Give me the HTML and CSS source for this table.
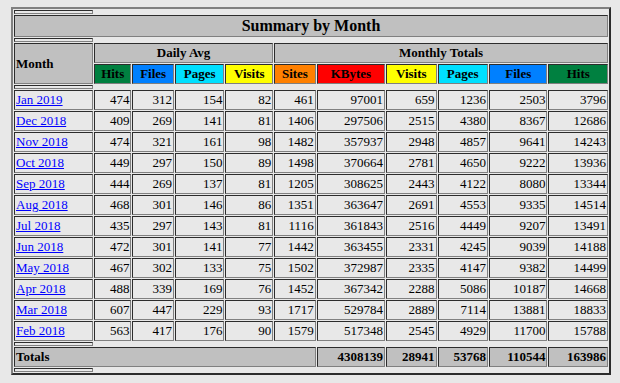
FILE: index.html
```html
<!DOCTYPE html>
<html>
<head>
<meta charset="utf-8">
<title>Summary by Month</title>
<link rel="stylesheet" href="styles.css">
</head>
<body>
<table class="summary">
<tr><th class="spacer"></th></tr>
<tr><th class="title" colspan="11">Summary by Month</th></tr>
<tr><th class="spacer"></th></tr>
<tr>
<th class="grey left month" rowspan="2">Month</th>
<th class="grey" colspan="4">Daily Avg</th>
<th class="grey" colspan="6">Monthly Totals</th>
</tr>
<tr>
<th class="c-hits">Hits</th>
<th class="c-files">Files</th>
<th class="c-pages">Pages</th>
<th class="c-visits">Visits</th>
<th class="c-sites">Sites</th>
<th class="c-kbytes">KBytes</th>
<th class="c-visits">Visits</th>
<th class="c-pages">Pages</th>
<th class="c-files">Files</th>
<th class="c-hits">Hits</th>
</tr>
<tr><th class="spacer"></th></tr>
<tr><td class="m"><a href="#">Jan 2019</a></td><td>474</td><td>312</td><td>154</td><td>82</td><td>461</td><td>97001</td><td>659</td><td>1236</td><td>2503</td><td>3796</td></tr>
<tr><td class="m"><a href="#">Dec 2018</a></td><td>409</td><td>269</td><td>141</td><td>81</td><td>1406</td><td>297506</td><td>2515</td><td>4380</td><td>8367</td><td>12686</td></tr>
<tr><td class="m"><a href="#">Nov 2018</a></td><td>474</td><td>321</td><td>161</td><td>98</td><td>1482</td><td>357937</td><td>2948</td><td>4857</td><td>9641</td><td>14243</td></tr>
<tr><td class="m"><a href="#">Oct 2018</a></td><td>449</td><td>297</td><td>150</td><td>89</td><td>1498</td><td>370664</td><td>2781</td><td>4650</td><td>9222</td><td>13936</td></tr>
<tr><td class="m"><a href="#">Sep 2018</a></td><td>444</td><td>269</td><td>137</td><td>81</td><td>1205</td><td>308625</td><td>2443</td><td>4122</td><td>8080</td><td>13344</td></tr>
<tr><td class="m"><a href="#">Aug 2018</a></td><td>468</td><td>301</td><td>146</td><td>86</td><td>1351</td><td>363647</td><td>2691</td><td>4553</td><td>9335</td><td>14514</td></tr>
<tr><td class="m"><a href="#">Jul 2018</a></td><td>435</td><td>297</td><td>143</td><td>81</td><td>1116</td><td>361843</td><td>2516</td><td>4449</td><td>9207</td><td>13491</td></tr>
<tr><td class="m"><a href="#">Jun 2018</a></td><td>472</td><td>301</td><td>141</td><td>77</td><td>1442</td><td>363455</td><td>2331</td><td>4245</td><td>9039</td><td>14188</td></tr>
<tr><td class="m"><a href="#">May 2018</a></td><td>467</td><td>302</td><td>133</td><td>75</td><td>1502</td><td>372987</td><td>2335</td><td>4147</td><td>9382</td><td>14499</td></tr>
<tr><td class="m"><a href="#">Apr 2018</a></td><td>488</td><td>339</td><td>169</td><td>76</td><td>1452</td><td>367342</td><td>2288</td><td>5086</td><td>10187</td><td>14668</td></tr>
<tr><td class="m"><a href="#">Mar 2018</a></td><td>607</td><td>447</td><td>229</td><td>93</td><td>1717</td><td>529784</td><td>2889</td><td>7114</td><td>13881</td><td>18833</td></tr>
<tr><td class="m"><a href="#">Feb 2018</a></td><td>563</td><td>417</td><td>176</td><td>90</td><td>1579</td><td>517348</td><td>2545</td><td>4929</td><td>11700</td><td>15788</td></tr>
<tr><th class="spacer"></th></tr>
<tr>
<th class="grey left" colspan="6">Totals</th>
<th class="grey right">4308139</th>
<th class="grey right">28941</th>
<th class="grey right">53768</th>
<th class="grey right">110544</th>
<th class="grey right">163986</th>
</tr>
<tr><th class="spacer"></th></tr>
</table>
</body>
</html>
```

FILE: styles.css
```css
html, body {
  background: #e8e8e8;
}
body {
  margin: 7px 0 0 11px;
  color: #000;
  font-family: "Liberation Serif", "Times New Roman", serif;
  font-size: 16px;
}
.summary {
  width: 600px;
  border: 2px outset #808080;
  border-spacing: 1px;
  border-collapse: separate;
}
.summary th,
.summary td {
  border: 1px inset #808080;
  padding: 1px;
  font-size: 13px;
  line-height: 16px;
}
.summary td {
  text-align: right;
  white-space: nowrap;
}
.summary td.m {
  text-align: left;
}
.summary th {
  text-align: center;
  font-weight: bold;
}
.summary th.spacer {
  height: 2px;
  padding: 0;
  line-height: 0;
  font-size: 0;
}
.summary th.title {
  background: #c0c0c0;
  font-size: 16px;
  line-height: 18px;
}
.grey { background: #c0c0c0; }
.summary th.left { text-align: left; }
.summary th.right { text-align: right; }
.month { vertical-align: middle; }
a { color: #0000ff; text-decoration: underline; }
.c-hits { background: #008040; }
.c-files { background: #0080ff; }
.c-pages { background: #00e0ff; }
.c-visits { background: #ffff00; }
.c-sites { background: #ff8000; }
.c-kbytes { background: #ff0000; }
```
